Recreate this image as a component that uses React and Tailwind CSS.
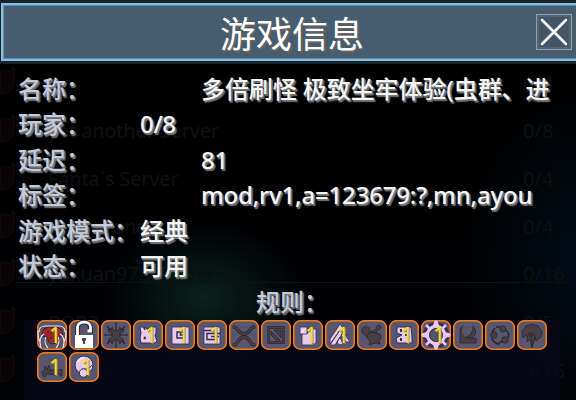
import React from "react";

const GHOSTS = [
  ["", "0/4"],
  ["yet another Server", "0/8"],
  ["Fanta`s Server", "0/4"],
  ["             and", "0/4"],
  ["yuxuan97's Server", "0/16"],
  ["POP2", "0/5"],
  ["           4", "0/16"],
];

const ROWS = [
  ["名称：", "多倍刷怪 极致坐牢体验(虫群、进", "pl-[61px] tracking-[-0.08px]"],
  ["玩家：", "0/8", "tracking-[-0.3px]"],
  ["延迟：", "81", "pl-[61px] tracking-[-0.3px]"],
  ["标签：", "mod,rv1,a=123679:?,mn,ayou", "pl-[61px] tracking-[-0.18px]"],
  ["游戏模式：", "经典", ""],
  ["状态：", "可用", ""],
];

const P = "#e7c9ed";
const D = "#4a3e46";
const K = "#2c2530";
const V = "#352b57";

const ICONS = {
  jaws: (
    <g>
      <path d="M5 13 7 9l4-2h9l5 3 1 5-4 3-2 5-5 1-3-2-2-5-4-1z" fill="#9c2828" stroke="#401a24" />
      <path d="M11 11v2M14 17v2M17 20v2M13 13h1" stroke="#571923" strokeWidth="1.500" />
      <path d="M2 12c0-4 3-6 6-6h14c4 0 6 2 6 6M7 14c-4 2-5 8-3 14M9 17c-2 3-1 8 2 11M23 14c4 2 5 8 3 14M21 17c2 3 1 8-2 11M1 11c0 5 0 8 2 11M29 11c0 5 0 8-2 11" fill="none" stroke="#eee5e9" strokeWidth="1.100" />
    </g>
  ),
  lock: (
    <g>
      <path d="M8.500 16V8c0-8 13-8 13 0v3h-3" fill="none" stroke="#302c3a" strokeWidth="5" />
      <path d="M8.500 16V7C8.500 .5 21.500 .5 21.500 7v4h-3" fill="none" stroke="#fff" strokeWidth="2.800" />
      <path d="M6 15h18v13H6z" fill="#fff" />
      <path d="M13 18h4v2l-1 1v3h-2v-3h-1z" fill="#4b4653" />
    </g>
  ),
  burst: (
    <g stroke={K} fill={D} strokeWidth=".8">
      <path d="M15 2v26M3 15h24M6 6l18 18M24 6 6 24" strokeWidth="1.200" />
      <path d="m11 7 2 4 2-1 2 1 2-4 1 3 3-1-1 3-4 2 2 1-2 1 4 3 1 3-3-1-1 3-2-4-2-1-2 1-2 4-1-3-3 1 1-3 4-3-2-1 2-1-4-2-1-3 3 1z" />
    </g>
  ),
  creature: (
    <g>
      <path d="M7 7h3l2 3V7l3 3 3 0 2-3h3v6l-1 3 2 5-2 2H8l-1-5 1-5z" fill={P} stroke={V} />
      <path d="M11 17h1.500v2H11zM18 17h1.500v2H18" fill={V} stroke={V} strokeWidth=".7" />
    </g>
  ),
  square: (
    <g>
      <path d="M7 7h17v17H7z" fill={P} stroke={V} strokeWidth=".8" />
      <path d="M12 12h7v6h-7zM15.500 12v3H19" fill="none" stroke={V} strokeWidth="1.500" />
    </g>
  ),
  maze: (
    <g>
      <path d="M7 7h16v17H7z" fill={P} stroke={V} strokeWidth=".8" />
      <path d="M7 10.500h12M23 13.500H10v6h10M22 16.500h-8" fill="none" stroke={V} strokeWidth="1.500" />
    </g>
  ),
  cross: (
    <g fill="none" strokeLinecap="round">
      <path d="M5 7c4 0 4 7 10 7s6-7 10-7M5 25c4 0 4-8 10-8s6 8 10 8" stroke={K} strokeWidth="3.400" />
      <path d="M5 7c4 0 4 7 10 7s6-7 10-7M5 25c4 0 4-8 10-8s6 8 10 8" stroke={D} strokeWidth="2" />
    </g>
  ),
  crate: (
    <g fill="none">
      <path d="M7.500 7.500h15v15h-15z" stroke={K} strokeWidth="2.400" />
      <path d="M7.500 7.500h15v15h-15z" stroke={D} strokeWidth="1" />
      <path d="M13 10h7v8zM10 11l9 9h-4l-5-5z" fill={D} stroke={K} strokeWidth=".8" />
    </g>
  ),
  blocks: (
    <g fill={P} stroke={V} strokeWidth=".8">
      <path d="M9 13h6V9h8v14l-3 2H9z" />
      <path d="M7 7h7v7H7z" />
      <path d="m8 13 5-5" fill="none" stroke="#fff0fb" />
    </g>
  ),
  arrows: (
    <g fill={P} stroke={V} strokeWidth=".8">
      <path d="m15 4 6 8 1 3-7-5L5 24v-5z" />
      <path d="m15 10 3 3-8 12H5zM15 17l3 7-4 1-2-3zM18 12l7 10h-4l-5-7z" />
    </g>
  ),
  turtle: (
    <g fill={D} stroke={K} strokeWidth=".8">
      <path d="m14 12 5-3 1-3 3-1 1 3-3 2-2 3z" />
      <path d="m13 12 7 1 3 1 1 4-2 3 1 3-3-1-5 1-3 1 1-3-2-4-2-1z" />
      <circle cx="9" cy="11" r="4.200" />
    </g>
  ),
  faces: (
    <g>
      <path d="m8 7 14 0 1 10v6H8l-1-5 6-3-5-2z" fill={P} stroke={V} />
      <path d="M11 9h2v3h-2zM17 9h2v3h-2zM11 18h2v3h-2zM16 14h2v2h-2z" fill={V} />
    </g>
  ),
  gear: (
    <g>
      <circle cx="15" cy="15" r="13" fill={V} />
      <path d="m12 7 2-6h2l2 6zM12 23l2 6h2l2-6zM7 12l-6 2v2l6 2zM23 12l6 2v2l-6 2z" fill={P} stroke={P} />
      <path d="m5 5 4 4M25 5l-4 4M5 25l4-4M25 25l-4-4" stroke={P} strokeWidth="2.500" />
      <circle cx="15" cy="15" r="8.500" fill="#55506b" stroke={P} strokeWidth="3.500" />
      <circle cx="15" cy="15" r="6.500" fill="none" stroke={V} />
    </g>
  ),
  claws: (
    <g fill={D} stroke={K} strokeWidth=".8">
      <path d="M10 6c-3 5-2 9 3 12 3 1 6 1 10 0v5H7V11c0-2 1-4 3-5z" />
      <path d="M20 6c4 5 3 9-1 12l-6-1c4-1 7-5 7-11z" />
    </g>
  ),
  triad: (
    <g fill={D} stroke={K} strokeWidth=".8">
      <path d="M11 7h4M21 10c3 2 3 5 2 8M7 18c1 4 4 6 8 6M10 8l-3 4M14 22l4 0" fill="none" strokeWidth="1.500" />
      <circle cx="18" cy="9" r="3" /><circle cx="9" cy="15" r="3.200" /><circle cx="20" cy="20" r="3.200" />
    </g>
  ),
  meteor: (
    <g fill={D} stroke={K} strokeWidth=".8">
      <path d="m6 18-1-7 4-5 6-2 6 2 4 5-1 6-5 4-1-4-3 11-2-9-3 3v-7l-3 1z" />
      <path d="m10 17 3-5 1 6 2-5 3 7M15 19v7" fill="none" />
    </g>
  ),
  beast: (
    <path d="m5 20 2-1 1-5 2 4 2-5 1 5h8l4-1v7h-2v-2l-3 1-10-1-2 3-2-1v-2z" fill={D} stroke={K} strokeWidth=".8" />
  ),
  orb: (
    <g>
      <circle cx="15" cy="13" r="9" fill={P} stroke={V} />
      <path d="M13 17c4 1 8-1 10-4" fill="none" stroke={V} />
      <circle cx="14.500" cy="21" r="4.200" fill={P} stroke={V} />
      <path d="M9 10c1-3 3-4 6-4" fill="none" stroke="#fff0fb" strokeWidth="1.500" />
    </g>
  ),
};

const TILES = [
  ["jaws", 1], ["lock"], ["burst"], ["creature", 1], ["square", 1], ["maze", 1],
  ["cross"], ["crate"], ["blocks", 1], ["arrows", 1], ["turtle"], ["faces", 1],
  ["gear", 1], ["claws"], ["triad"], ["meteor"], ["beast", 1], ["orb", 1],
];

function Tile({ name, count }) {
  return (
    <div className="relative size-[30px]">
      <svg viewBox="0 0 30 30" className="block size-[30px]">
        <rect x=".8" y=".8" width="28.400" height="28.400" rx="6.500" fill="#58566c" stroke="#f07c1c" strokeWidth="1.600" />
        {ICONS[name]}
      </svg>
      {count && (
        <span className="absolute left-[12px] top-[3px] font-['Noto_Sans','Open_Sans',sans-serif] text-[21px] leading-[24px] text-[#efe12a] [text-shadow:1px_1px_0_#92864e]">
          {count}
        </span>
      )}
    </div>
  );
}

function Devil() {
  return (
    <svg viewBox="0 0 16 32" className="-mb-[5px] h-8 w-4 shrink-0">
      <path d="M0 7c3-2 6-1 9 1 3 0 4-2 3-5 4 3 3 7 1 9 2 6 1 10-3 15-3 2-7 3-10 2z" fill="#090304" stroke="#160d0f" />
    </svg>
  );
}

export default function App() {
  return (
    <div className="relative h-[400px] w-[576px] overflow-hidden bg-[radial-gradient(ellipse_100px_75px_at_205px_298px,#0a211c,transparent),radial-gradient(ellipse_110px_170px_at_576px_260px,#020c16,transparent),linear-gradient(#000,#000103)] font-['Noto_Sans','Noto_Sans_CJK_SC',sans-serif]">
      <div className="absolute inset-x-0 top-[43px] flex flex-col font-['Noto_Sans',sans-serif] text-[20px] leading-[16px] text-[#0e1011]">
        {GHOSTS.map(([name, n], i) => (
          <div key={i} className="flex h-12 items-end">
            <Devil />
            <div className={"flex h-[48px] w-[553px] items-end pl-8 " + (i === 4 ? "rounded-br border-b border-[#071614]" : "")}>
              <span className="w-[475px] whitespace-pre tracking-[-0.18px]">{name}</span>
              <span>{n}</span>
            </div>
          </div>
        ))}
      </div>

      <div className="relative flex h-full flex-col">
        <header className="h-[64px] w-full shrink-0 bg-[#15212b] pb-[3px] pl-px pt-[3px]">
          <div className="flex h-[58px] items-center border-y-2 border-l-2 border-[#8cbce0] bg-[#465d6f] shadow-[inset_1px_1px_0_#6690ad,inset_0_-1px_0_#6690ad]">
            <h1 className="ml-[217px] w-[316px] font-['Noto_Sans_CJK_SC',sans-serif] text-[36px] font-normal leading-[52px] text-white [text-shadow:1px_1px_1px_#686868,2px_2px_1px_#606060]">
              游戏信息
            </h1>
            <svg viewBox="0 0 36 36" className="size-9">
              <rect x=".5" y=".5" width="35" height="35" fill="#4f6577" stroke="#93a0aa" />
              <rect x="3" y="3" width="30" height="30" fill="#435467" />
              <path d="m6 6 24 24M30 6 6 30" stroke="#fff" strokeWidth="2.600" strokeLinecap="round" />
            </svg>
          </div>
        </header>

        <main className="flex flex-col pt-[6.500px] text-[24px] font-medium leading-[35.500px] text-[#f5f5f5] [text-shadow:1px_1px_0_#777,1px_2px_1px_#666,2px_2px_1px_#666]">
          {ROWS.map(([label, value, style]) => (
            <div key={label} className="flex h-[35.500px] whitespace-pre pl-[18px]">
              <span className="w-[122px] shrink-0 text-[#c5cbdc]">{label}</span>
              <span className={style}>{value}</span>
            </div>
          ))}
          <div className="h-[35.500px] pl-[256px] text-[#c5cbdc]">规则：</div>
        </main>

        <section className="ml-[24px] mt-auto h-[80px] w-[536px] shrink-0 bg-[#090819]/80 pl-[13px]">
          <div className="flex w-[512px] flex-wrap gap-[2px]">
            {TILES.map(([name, count]) => (
              <Tile key={name} name={name} count={count} />
            ))}
          </div>
        </section>
      </div>
    </div>
  );
}
